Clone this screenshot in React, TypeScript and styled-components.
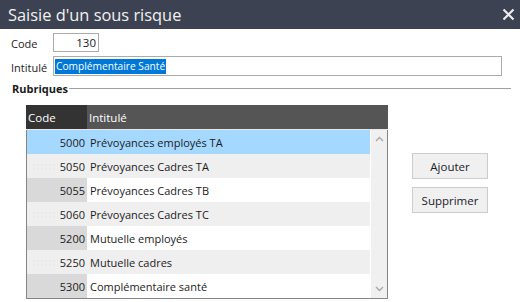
import styled, { createGlobalStyle } from "styled-components";

const GlobalStyle = createGlobalStyle`
  html, body {
    margin: 0;
    padding: 0;
    background: #ffffff;
  }
  body {
    font-family: "Open Sans", "Noto Sans", sans-serif;
    font-size: 11px;
    color: #1b1b1b;
  }
`;

const Window = styled.div`
  width: 520px;
  height: 302px;
  background: #ffffff;
  overflow: hidden;
  display: flex;
  flex-direction: column;
`;

const TitleBar = styled.div`
  height: 29px;
  flex: none;
  background: #3c4251;
  display: flex;
  align-items: center;
  justify-content: space-between;
  padding: 0 5px 0 8px;
  color: #f2f2f2;
`;

const Title = styled.span`
  font-size: 16.4px;
  line-height: 29px;
`;

const CloseIcon = styled.svg`
  width: 13px;
  height: 13px;
  display: block;
`;

const Body = styled.div`
  padding: 4px 0 0 11px;
  display: flex;
  flex-direction: column;
`;

const FieldRow = styled.div<{ $top?: number }>`
  display: flex;
  align-items: flex-end;
  margin-top: ${(p) => p.$top ?? 0}px;
`;

const Label = styled.label`
  width: 42px;
  line-height: 15px;
  padding-bottom: 1px;
`;

const Input = styled.div<{ $w: number; $h: number; $right?: boolean }>`
  width: ${(p) => p.$w}px;
  height: ${(p) => p.$h}px;
  box-sizing: border-box;
  border: 1px solid #ababab;
  display: flex;
  align-items: center;
  justify-content: ${(p) => (p.$right ? "flex-end" : "flex-start")};
  padding: 0 2px 0 1px;
  font-size: 11.5px;
`;

const Selected = styled.span`
  background: #0078d7;
  color: #ffffff;
  font-size: 10.2px;
  line-height: 15px;
  padding: 0 1px;
`;

const SectionHead = styled.div`
  display: flex;
  align-items: center;
  margin-top: 7px;
  gap: 1px;
`;

const SectionTitle = styled.span`
  font-weight: 700;
  font-size: 11px;
  line-height: 12px;
  padding-left: 1px;
`;

const SectionLine = styled.div`
  width: 442px;
  height: 1px;
  background: #a0a0a0;
  margin-top: -1px;
`;

const Content = styled.div`
  display: flex;
  margin-top: 10px;
  padding-left: 15px;
`;

const Table = styled.div`
  width: 362px;
  display: flex;
  flex-direction: column;
`;

const HeaderRow = styled.div`
  display: grid;
  grid-template-columns: 61px 1fr;
  height: 24px;
  border-bottom: 1px solid #e8e8e8;
  color: #ffffff;
`;

const HeaderCell = styled.div<{ $dark?: boolean }>`
  background: ${(p) => (p.$dark ? "#333333" : "#555555")};
  display: flex;
  align-items: center;
  padding-left: 2px;
  font-size: 11.5px;
`;

const Grid = styled.div`
  display: flex;
  border: 1px solid #858585;
  border-top: none;
  height: 168px;
`;

const Rows = styled.div`
  width: 343px;
  display: flex;
  flex-direction: column;
`;

const Row = styled.div<{ $kind: "sel" | "alt" | "plain" }>`
  display: grid;
  grid-template-columns: 60px 1fr;
  height: 24px;
  background: ${(p) =>
    p.$kind === "sel" ? "#a5d8ff" : p.$kind === "alt" ? "#efefef" : "#ffffff"};
`;

const CodeCell = styled.div<{ $kind: "sel" | "alt" | "plain" }>`
  position: relative;
  display: flex;
  align-items: center;
  justify-content: flex-end;
  padding-right: 2px;
  background: ${(p) =>
    p.$kind === "sel" ? "#a5d8ff" : p.$kind === "alt" ? "#efefef" : "#d9d9d9"};
  &::before {
    content: "";
    display: ${(p) => (p.$kind === "alt" ? "block" : "none")};
    position: absolute;
    left: 5px;
    top: 9px;
    width: 26px;
    height: 8px;
    background-image: radial-gradient(circle, #dedede 0.5px, transparent 0.8px);
    background-size: 4px 4px;
  }
`;

const TextCell = styled.div`
  display: flex;
  align-items: center;
  padding-left: 3px;
`;

const ScrollBar = styled.div`
  width: 16px;
  margin-left: 1px;
  background: #f0f0f0;
  display: flex;
  flex-direction: column;
  justify-content: space-between;
  align-items: center;
`;

const Arrow = styled.svg`
  width: 9px;
  height: 6px;
  margin: 6px 0;
  display: block;
`;

const Buttons = styled.div`
  display: flex;
  flex-direction: column;
  gap: 8px;
  margin: 48px 0 0 24px;
`;

const Button = styled.button`
  width: 76px;
  height: 26px;
  background: #f0f0f0;
  border: 1px solid #cccccc;
  font-family: inherit;
  font-size: 11.5px;
  color: #1a1a2a;
  padding: 0;
  cursor: pointer;
`;

type Kind = "sel" | "alt" | "plain";

const rubriques: { code: string; label: string; kind: Kind }[] = [
  { code: "5000", label: "Prévoyances employés TA", kind: "sel" },
  { code: "5050", label: "Prévoyances Cadres TA", kind: "alt" },
  { code: "5055", label: "Prévoyances Cadres TB", kind: "plain" },
  { code: "5060", label: "Prévoyances Cadres TC", kind: "alt" },
  { code: "5200", label: "Mutuelle employés", kind: "plain" },
  { code: "5250", label: "Mutuelle cadres", kind: "alt" },
  { code: "5300", label: "Complémentaire santé", kind: "plain" },
];

export default function App() {
  return (
    <>
      <GlobalStyle />
      <Window>
        <TitleBar>
          <Title>Saisie d'un sous risque</Title>
          <CloseIcon viewBox="0 0 13 13">
            <path d="M1.5 1.5 L11.5 11.5 M11.5 1.5 L1.5 11.5" stroke="#ececec" strokeWidth="2.2" />
          </CloseIcon>
        </TitleBar>
        <Body>
          <FieldRow>
            <Label>Code</Label>
            <Input $w={46} $h={19} $right>130</Input>
          </FieldRow>
          <FieldRow $top={4}>
            <Label>Intitulé</Label>
            <Input $w={449} $h={20}>
              <Selected>Complémentaire Santé</Selected>
            </Input>
          </FieldRow>
          <SectionHead>
            <SectionTitle>Rubriques</SectionTitle>
            <SectionLine />
          </SectionHead>
          <Content>
            <Table>
              <HeaderRow>
                <HeaderCell $dark>Code</HeaderCell>
                <HeaderCell>Intitulé</HeaderCell>
              </HeaderRow>
              <Grid>
                <Rows>
                  {rubriques.map((r) => (
                    <Row key={r.code} $kind={r.kind}>
                      <CodeCell $kind={r.kind}>{r.code}</CodeCell>
                      <TextCell>{r.label}</TextCell>
                    </Row>
                  ))}
                </Rows>
                <ScrollBar>
                  <Arrow viewBox="0 0 9 6">
                    <path d="M1 5 L4.5 1.5 L8 5" fill="none" stroke="#a6a6a6" strokeWidth="1.3" />
                  </Arrow>
                  <Arrow viewBox="0 0 9 6">
                    <path d="M1 1 L4.5 4.5 L8 1" fill="none" stroke="#a6a6a6" strokeWidth="1.3" />
                  </Arrow>
                </ScrollBar>
              </Grid>
            </Table>
            <Buttons>
              <Button>Ajouter</Button>
              <Button>Supprimer</Button>
            </Buttons>
          </Content>
        </Body>
      </Window>
    </>
  );
}
